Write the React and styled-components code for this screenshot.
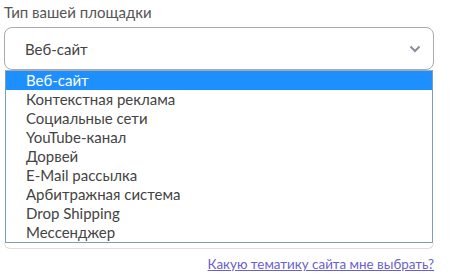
import React from "react";
import styled, { createGlobalStyle } from "styled-components";

const Global = createGlobalStyle`
  body {
    margin: 0;
    background: #fff;
    font-family: Lato, "Open Sans", sans-serif;
  }
`;

const Wrap = styled.div`
  width: 430px;
  padding: 2px 0 0 4px;
  display: flex;
  flex-direction: column;
`;

const Label = styled.div`
  font-size: 15px;
  color: #555;
  line-height: 20px;
  margin-bottom: 5px;
`;

const Select = styled.div`
  height: 41px;
  border: 1px solid #a9a9b0;
  border-radius: 8px;
  display: flex;
  align-items: center;
  justify-content: space-between;
  padding: 0 12px 0 20px;
  font-size: 15px;
  color: #444;
`;

const List = styled.ul`
  list-style: none;
  margin: 0 1px;
  padding: 0;
  border: 1px solid #7f9db9;
  border-top: 1px solid #a9a9b0;
`;

const Option = styled.li`
  height: 19px;
  line-height: 19px;
  padding-left: 20px;
  font-size: 15px;
  color: ${(p) => (p.active ? "#fff" : "#444")};
  background: ${(p) => (p.active ? "#1e8fff" : "#fff")};
`;

const Bottom = styled.div`
  height: 5px;
  border: 1px solid #dedede;
  border-top: none;
  border-radius: 0 0 8px 8px;
`;

const Link = styled.a`
  align-self: flex-end;
  margin-top: 7px;
  font-size: 13.4px;
  color: #6a5fd0;
  text-decoration: underline;
  cursor: pointer;
`;

const options = [
  "Веб-сайт",
  "Контекстная реклама",
  "Социальные сети",
  "YouTube-канал",
  "Дорвей",
  "E-Mail рассылка",
  "Арбитражная система",
  "Drop Shipping",
  "Мессенджер",
];

export default function App() {
  return (
    <>
      <Global />
      <Wrap>
        <Label>Тип вашей площадки</Label>
        <Select>
          <span>Веб-сайт</span>
          <svg width="12" height="8" viewBox="0 0 12 8">
            <path d="M1.5 1.5 L6 6 L10.5 1.5" fill="none" stroke="#8c8c9a" strokeWidth="2" />
          </svg>
        </Select>
        <List>
          {options.map((o, i) => (
            <Option key={o} active={i === 0}>
              {o}
            </Option>
          ))}
        </List>
        <Bottom />
        <Link>Какую тематику сайта мне выбрать?</Link>
      </Wrap>
    </>
  );
}
